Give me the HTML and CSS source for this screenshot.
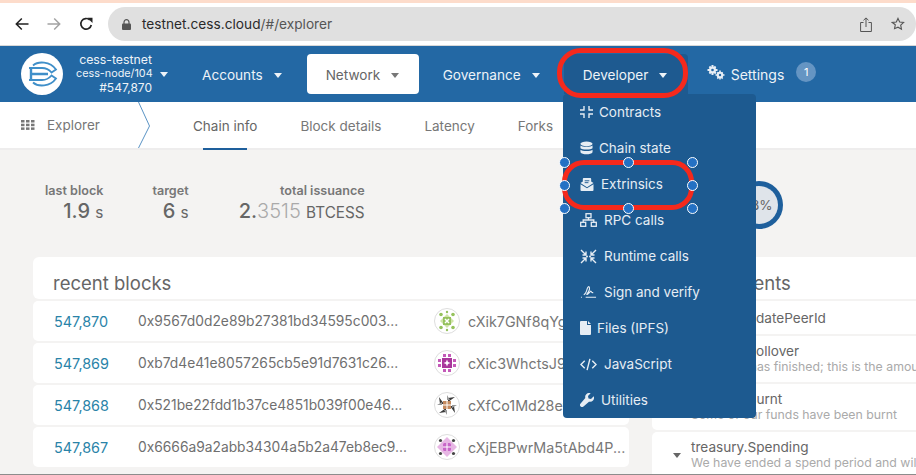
FILE: index.html
```html
<!DOCTYPE html>
<html>
<head>
<meta charset="utf-8"/>
<title>testnet.cess.cloud</title>
<link rel="stylesheet" href="styles.css">
</head>
<body>
<div class="topstrip"></div>

<div class="browserbar">
  <svg class="bicon back" width="14" height="14" viewBox="0 0 14 14"><path d="M13.500 7H1.500M6.800 1.500 1.300 7l5.500 5.500" fill="none" stroke="#222" stroke-width="1.500"/></svg>
  <svg class="bicon fwd" width="14" height="14" viewBox="0 0 14 14"><path d="M.5 7h12M7.200 1.500 12.700 7l-5.500 5.500" fill="none" stroke="#a3a3a3" stroke-width="1.500"/></svg>
  <svg class="bicon reload" width="14" height="14" viewBox="0 0 14 14"><path d="M12.300 8A5.300 5.300 0 1 1 10.800 3" fill="none" stroke="#222" stroke-width="1.700"/><path d="M8.300.8h5.200V6z" fill="#222"/></svg>
  <div class="urlpill">
    <svg width="9" height="11" viewBox="0 0 9 11"><path d="M2 5V3.200a2.500 2.500 0 0 1 5 0V5" fill="none" stroke="#555" stroke-width="1.200"/><rect y="4.400" width="9" height="6.600" rx="1" fill="#555"/></svg>
    <span class="host">testnet.cess.cloud</span><span class="path">/#/explorer</span>
    <span class="spacer"></span>
    <svg width="12" height="15" viewBox="0 0 12 15"><path d="M3.500 5.500H.6v9h10.800v-9H8.500M6 10V1M3.500 3.300 6 .9l2.500 2.400" fill="none" stroke="#555" stroke-width="1"/></svg>
    <svg width="14" height="14" viewBox="0 0 15 15"><path d="m7.500 1.500 1.800 3.900 4.200.5-3.100 2.900.8 4.200-3.700-2.100L3.800 12.500l.8-4.200L1.500 5.900l4.200-.5z" fill="none" stroke="#555" stroke-width="1.200"/></svg>
  </div>
</div>

<nav class="mainnav">
  <div class="chain">
    <svg class="logo" width="42" height="42" viewBox="0 0 42 42">
      <circle cx="21" cy="21" r="21" fill="#fff"/>
      <g fill="none" stroke="#3f8fc9" stroke-width="1.800">
        <path d="M12 12.500C17 8 29 8 35 16.500L30.500 19.500C28 16.500 25 15 21 15H8"/>
        <path d="M12 29.500C17 34 29 34 35 25.500L30.500 22.500C28 25.500 25 27 21 27H8"/>
        <path d="M10 15V27M10 21H27" stroke-width="2.400"/>
      </g>
    </svg>
    <div class="chaininfo">
      <div class="cname">cess-testnet</div>
      <div class="small">cess-node/104<i class="caret"></i></div>
      <div>#547,870</div>
    </div>
  </div>
  <a class="tab accounts">Accounts<i class="caret"></i></a>
  <a class="tab network">Network<i class="caret"></i></a>
  <a class="tab governance">Governance<i class="caret"></i></a>
  <a class="tab developer">Developer<i class="caret"></i></a>
  <a class="tab settings">
    <svg width="18" height="15" viewBox="0 0 18 15"><g fill="#e8eef5"><circle cx="5.500" cy="5" r="3.500"/><path d="M4.500 0h2v10h-2zM.5 4h10v2H.5zM1.700 2.200l1.400-1.400 6.400 7-1.400 1.400zM7.900.8l1.400 1.400-6.200 7-1.400-1.400z"/><circle cx="13" cy="10" r="3.300"/><path d="M12.200 5.500h1.600v9h-1.600zM8.500 9.200h9v1.600h-9zM9.800 7.900l1.100-1.100 5.300 6.300-1.100 1.100zM15.100 6.800l1.100 1.100-5.300 6.300-1.100-1.100z"/></g><circle cx="5.500" cy="5" r="1.300" fill="#2368a4"/><circle cx="13" cy="10" r="1.200" fill="#2368a4"/></svg>
    Settings<span class="badge">1</span>
  </a>
</nav>

<div class="subnav">
  <div class="crumb">
    <svg width="14" height="10" viewBox="0 0 14 10"><g fill="#777"><rect width="3.500" height="2.500"/><rect x="5" width="3.500" height="2.500"/><rect x="10" width="3.500" height="2.500"/><rect y="3.700" width="3.500" height="2.500"/><rect x="5" y="3.700" width="3.500" height="2.500"/><rect x="10" y="3.700" width="3.500" height="2.500"/><rect y="7.400" width="3.500" height="2.500"/><rect x="5" y="7.400" width="3.500" height="2.500"/><rect x="10" y="7.400" width="3.500" height="2.500"/></g></svg>
    <span>Explorer</span>
  </div>
  <svg class="chevron" width="13" height="46" viewBox="0 0 13 46"><path d="M.5 0 11.500 24 .5 46" fill="none" stroke="#5a93c4" stroke-width="1"/></svg>
  <div class="subtabs">
    <a class="active">Chain info</a>
    <a>Block details</a>
    <a>Latency</a>
    <a>Forks</a>
  </div>
</div>

<main class="content">
  <div class="stats">
    <div class="stat s1"><label>last block</label><b>1.9 <small>s</small></b></div>
    <div class="stat s2"><label>target</label><b>6 <small>s</small></b></div>
    <div class="stat s3"><label>total issuance</label><b>2.<em>3515</em> <small>BTCESS</small></b></div>
    <div class="ring"><span>18%</span></div>
  </div>

  <div class="columns">
    <section class="blocks">
      <h2 class="cardhead">recent blocks</h2>
      <div class="row">
        <a class="num">547,870</a><span class="hash">0x9567d0d2e89b27381bd34595c003...</span>
        <svg class="ident" width="26" height="26" viewBox="0 0 26 26"><circle cx="13" cy="13" r="12.500" fill="#fff" stroke="#ddd"/><path d="M13 6l7 7-7 7-7-7z" fill="#cfe3a8"/><rect x="9" y="9" width="8" height="8" fill="#96c25e"/><path d="M11 11l4 4M15 11l-4 4" stroke="#fff" stroke-width="1.500"/><g fill="#96c25e"><circle cx="7" cy="6.500" r="1.800"/><circle cx="19" cy="6.500" r="1.800"/><circle cx="7" cy="19.500" r="1.800"/><circle cx="19" cy="19.500" r="1.800"/><circle cx="13" cy="4" r="1.200"/><circle cx="13" cy="22" r="1.200"/></g></svg>
        <span class="addr">cXik7GNf8qYgfKhTz</span>
      </div>
      <div class="row">
        <a class="num">547,869</a><span class="hash">0xb7d4e41e8057265cb5e91d7631c26...</span>
        <svg class="ident" width="26" height="26" viewBox="0 0 26 26"><circle cx="13" cy="13" r="12.500" fill="#fff" stroke="#ddd"/><rect x="8" y="8" width="10" height="10" fill="#a9369b"/><path d="M13 9.500l1 2.500 2.500 1-2.500 1-1 2.500-1-2.500-2.500-1 2.500-1z" fill="#fff"/><g fill="#c45ab8"><rect x="9" y="4" width="3" height="3"/><rect x="14" y="4" width="3" height="3"/><rect x="9" y="19" width="3" height="3"/><rect x="14" y="19" width="3" height="3"/><rect x="4" y="9" width="3" height="3"/><rect x="4" y="14" width="3" height="3"/><rect x="19" y="9" width="3" height="3"/><rect x="19" y="14" width="3" height="3"/></g></svg>
        <span class="addr">cXic3WhctsJ9dQmRa</span>
      </div>
      <div class="row">
        <a class="num">547,868</a><span class="hash">0x521be22fdd1b37ce4851b039f00e46...</span>
        <svg class="ident" width="26" height="26" viewBox="0 0 26 26"><circle cx="13" cy="13" r="12.500" fill="#fff" stroke="#ddd"/><g fill="#3a3a3a"><path d="M5 5l5 7-4 0zM21 5l-7 5 0-4zM21 21l-5-7 4 0zM5 21l7-5 0 4z"/></g><g fill="#999"><path d="M3 13l5-3 0 3zM23 13l-5 3 0-3zM13 3l3 5-3 0zM13 23l-3-5 3 0z"/></g><rect x="9" y="9" width="8" height="8" fill="#c48a5f"/><path d="M13 9v8M9 13h8" stroke="#fff"/></svg>
        <span class="addr">cXfCo1Md28ewLpNtw</span>
      </div>
      <div class="row">
        <a class="num">547,867</a><span class="hash">0x6666a9a2abb34304a5b2a47eb8ec9...</span>
        <svg class="ident" width="26" height="26" viewBox="0 0 26 26"><circle cx="13" cy="13" r="12.500" fill="#fff" stroke="#ddd"/><path d="M13 3l10 10-10 10L3 13z" fill="#e7b6e4"/><rect x="9" y="9" width="8" height="8" rx="1.500" fill="#c865c8"/><path d="M13 9v8M9 13h8" stroke="#fff"/><g fill="#444"><circle cx="6.500" cy="6.500" r="1.600"/><circle cx="19.500" cy="6.500" r="1.600"/><circle cx="6.500" cy="19.500" r="1.600"/><circle cx="19.500" cy="19.500" r="1.600"/></g></svg>
        <span class="addr">cXjEBPwrMa5tAbd4P...</span>
      </div>
    </section>

    <section class="events">
      <h2 class="cardhead">recent events</h2>
      <div class="row ev one"><i class="evcaret"></i><div><p>sminer.UpdatePeerId</p></div></div>
      <div class="row ev"><i class="evcaret"></i><div><p>treasury.Rollover</p><p class="note">Spending has finished; this is the amount that rolls over</p></div></div>
      <div class="row ev"><i class="evcaret"></i><div><p>treasury.Burnt</p><p class="note">Some of our funds have been burnt</p></div></div>
      <div class="row ev"><i class="evcaret"></i><div><p>treasury.Spending</p><p class="note">We have ended a spend period and will now allocate</p></div></div>
    </section>
  </div>
</main>
<div class="bottomline"></div>

<div class="devmenu">
  <a class="m1"><svg width="13" height="12" viewBox="0 0 13 12"><path d="M4 0v4H0M9 0v4h4M4 12V8H0M9 12V8h4" fill="none" stroke="#e6edf4" stroke-width="1.400"/></svg>Contracts</a>
  <a class="m1"><svg width="13" height="14" viewBox="0 0 14 14"><g fill="#e6edf4"><ellipse cx="7" cy="2.500" rx="6.500" ry="2.500"/><path d="M.5 4.200C2 6 12 6 13.500 4.200v3C12 9 2 9 .5 7.200zM.5 9C2 10.800 12 10.800 13.500 9v2.500C12 14.500 2 14.500 .5 11.500z"/></g></svg>Chain state</a>
  <a class="m2"><svg width="14" height="13" viewBox="0 0 15 14"><path d="M.5 5.500 3 3.700V1.200C3 .5 3.500 0 4.200 0h6.600c.7 0 1.200.5 1.200 1.200v2.500l2.500 1.800L7.500 10z" fill="#e6edf4"/><path d="M.5 6.800 7.500 11l7-4.200V13a1 1 0 0 1-1 1h-12a1 1 0 0 1-1-1z" fill="#e6edf4"/><path d="M5 3h5M5 5h4" stroke="#1d5a90"/></svg>Extrinsics</a>
  <a class="m3"><svg width="17" height="14" viewBox="0 0 17 14"><g fill="none" stroke="#e6edf4" stroke-width="1.300"><rect x="6" y=".7" width="5" height="4"/><rect x=".7" y="9.300" width="5" height="4"/><rect x="11.300" y="9.300" width="5" height="4"/><path d="M8.500 4.700V7M3.200 9.300V7h10.600v2.300"/></g></svg>RPC calls</a>
  <a class="m3"><svg width="17" height="15" viewBox="0 0 17 15"><g fill="none" stroke="#e6edf4" stroke-width="1.400"><path d="M1 1l5 5M6 2.500V6H2.500M16 1l-5 5M11 2.500V6h3.500M1 14l5-5M6 12.500V9H2.500M16 14l-5-5M11 12.500V9h3.500"/></g><circle cx="7" cy="7.500" r="1" fill="#e6edf4"/><circle cx="10" cy="7.500" r="1" fill="#e6edf4"/></svg>Runtime calls</a>
  <a class="m3"><svg width="17" height="14" viewBox="0 0 18 14"><path d="M1 12.500h1M4 10c2-1 3-4 3.500-6S9.500 0 10 2.500 9 7 7.500 9 10 8 11 6.500s1 2 3 1M6 12.500h11" fill="none" stroke="#e6edf4" stroke-width="1.200"/></svg>Sign and verify</a>
  <a class="m4"><svg width="11" height="14" viewBox="0 0 11 14"><path d="M1 0h6v4h4v9a1 1 0 0 1-1 1H1a1 1 0 0 1-1-1V1a1 1 0 0 1 1-1zM8 0l3 3H8z" fill="#e6edf4"/></svg>Files (IPFS)</a>
  <a class="m3"><svg width="17" height="13" viewBox="0 0 18 13"><path d="M5 2.500 1 6.500l4 4M13 2.500l4 4-4 4M10.500.5l-3 12" fill="none" stroke="#e6edf4" stroke-width="1.500"/></svg>JavaScript</a>
  <a class="m2"><svg width="14" height="14" viewBox="0 0 14 14"><path d="M13.700 3.300 11 6l-2.500-.5L8 3 10.700.3A4 4 0 0 0 5.300 5L.6 10.500a2 2 0 0 0 2.900 2.900L9 8.700a4 4 0 0 0 4.700-5.400z" fill="#e6edf4"/></svg>Utilities</a>
</div>

<div class="oval oval-dev"></div>
<div class="oval oval-ext"></div>
<i class="handle h1"></i><i class="handle h2"></i><i class="handle h3"></i>
<i class="handle h4"></i><i class="handle h5"></i>
<i class="handle h6"></i><i class="handle h7"></i><i class="handle h8"></i>

</body>
</html>
```

FILE: styles.css
```css
html, body {
  margin: 0;
  padding: 0;
}

body {
  width: 916px;
  height: 475px;
  overflow: hidden;
  position: relative;
  font-family: Inter, "Liberation Sans", sans-serif;
  background-color: #f4f3f2;
  color: #666;
}

.topstrip {
  height: 3px;
  background-color: #fddccb;
}

/* browser chrome */
.browserbar {
  height: 42px;
  background-color: #fff;
  display: flex;
  align-items: center;
  padding-left: 15px;
  border-bottom: 1px solid #d8d8d8;
}

.bicon.fwd {
  margin-left: 18px;
}

.bicon.reload {
  margin-left: 18px;
}

.urlpill {
  margin-left: 15px;
  flex: 1;
  height: 34px;
  border-radius: 17px;
  background-color: #e0e0e0;
  display: flex;
  align-items: center;
  padding: 0 11px 0 14px;
  font-size: 13.700px;
}

.host {
  margin-left: 11px;
  color: #2a2a2a;
}

.path {
  color: #555;
}

.spacer {
  flex: 1;
}

.urlpill svg + svg {
  margin-left: 19px;
}

/* main nav */
.mainnav {
  height: 56px;
  background-color: #2368a4;
  display: flex;
  align-items: center;
  color: #eef3f8;
  font-size: 13.600px;
}

.chain {
  display: flex;
  align-items: center;
  width: 182px;
  padding-left: 21px;
  box-sizing: border-box;
}

.logo {
  flex: none;
}

.chaininfo {
  width: 76px;
  margin-left: 13px;
  padding-right: 16px;
  text-align: right;
  font-size: 12px;
  line-height: 14px;
  white-space: nowrap;
  position: relative;
}

.chaininfo .cname {
  font-size: 12.300px;
}

.chaininfo .small {
  font-size: 10.800px;
}

.chaininfo .caret {
  position: absolute;
  right: 0;
  top: 19px;
  margin: 0;
}

.caret {
  display: inline-block;
  border-left: 4.500px solid transparent;
  border-right: 4.500px solid transparent;
  border-top: 5px solid #eef3f8;
  margin-left: 11px;
  vertical-align: 2px;
}

.tab {
  display: block;
  white-space: nowrap;
}

.accounts {
  margin-left: 20px;
  margin-top: 2px;
}

.network {
  margin-left: 25px;
  width: 112px;
  height: 40px;
  line-height: 42px;
  padding-left: 19px;
  box-sizing: border-box;
  background-color: #fff;
  color: #666;
  border-radius: 4px;
}

.network .caret {
  border-top-color: #777;
}

.governance {
  margin-left: 24px;
  margin-top: 2px;
}

.developer {
  margin-left: 24px;
  width: 124px;
  height: 40px;
  line-height: 42px;
  box-sizing: border-box;
  padding-left: 19px;
  background-color: #1e5a90;
  border-radius: 4px 4px 0 0;
}

.settings {
  margin-left: 19px;
  display: flex;
  align-items: center;
  font-size: 14px;
}

.settings svg {
  margin-right: 6px;
  margin-top: -3px;
}

.badge {
  width: 20px;
  height: 20px;
  border-radius: 50%;
  background-color: #6595c3;
  color: #fff;
  font-size: 11px;
  line-height: 20px;
  text-align: center;
  margin-left: 12px;
  margin-top: -4px;
}

/* second row */
.subnav {
  height: 46px;
  background-color: #fff;
  display: flex;
  align-items: center;
  font-size: 13.500px;
  color: #777;
  border-bottom: 2px solid #eeeded;
}

.crumb {
  width: 138px;
  padding-left: 21px;
  box-sizing: border-box;
  display: flex;
  align-items: center;
  margin-top: -1px;
}

.crumb span {
  margin-left: 12px;
}

.chevron {
  flex: none;
  align-self: flex-start;
}

.subtabs {
  display: flex;
  margin-left: 42px;
  height: 46px;
  gap: 43px;
  line-height: 48px;
}

.subtabs a {
  white-space: nowrap;
}

.subtabs a.active {
  color: #666;
  position: relative;
}

.subtabs a.active::after {
  content: "";
  position: absolute;
  left: 10px;
  right: 10px;
  top: 46px;
  height: 2px;
  background-color: #1e5f9c;
}

/* content */
.stats {
  display: flex;
  height: 107px;
  padding-left: 45px;
  box-sizing: border-box;
  padding-top: 33px;
}

.stat {
  text-align: right;
}

.stat label {
  display: block;
  font-size: 12.600px;
  font-weight: 600;
  color: #777;
  line-height: 16px;
}

.stat b {
  display: block;
  font-size: 20px;
  font-weight: 500;
  color: #666;
  line-height: 24px;
}

.stat small {
  font-size: 15.300px;
  font-weight: 400;
}

.stat em {
  font-style: normal;
  font-weight: 300;
  color: #aaa;
}

.s2 {
  margin-left: 49px;
}

.s3 {
  margin-left: 50px;
}

.ring {
  position: absolute;
  left: 735px;
  top: 181px;
  width: 48px;
  height: 48px;
  box-sizing: border-box;
  border-radius: 50%;
  background-color: #dfe4ea;
  border: 5px solid #1e5f9c;
  border-left-color: transparent;
  font-size: 13.500px;
  line-height: 38px;
  text-align: center;
}

.columns {
  display: flex;
  gap: 23px;
  padding-left: 33px;
}

section {
  flex: none;
}

.blocks {
  width: 596px;
}

.events {
  width: 300px;
}

.cardhead {
  margin: 0 0 2px;
  height: 42px;
  background-color: #fff;
  border-radius: 6px;
  font-size: 18.500px;
  font-weight: 400;
  line-height: 53px;
  padding-left: 20px;
  color: #666;
  overflow: hidden;
}

.row {
  height: 40px;
  background-color: #fff;
  border-radius: 5px;
  margin-bottom: 2px;
  display: flex;
  align-items: center;
  font-size: 13.800px;
  white-space: nowrap;
  overflow: hidden;
}

.num {
  margin-left: 21px;
  width: 84px;
  font-size: 14.400px;
  color: #2a83a8;
}

.hash {
  width: 296px;
  color: #6f6f6f;
}

.ident {
  flex: none;
}

.addr {
  margin-left: 8px;
  font-size: 14.300px;
  color: #777;
}

.ev {
  height: 46px;
  padding-left: 21px;
  line-height: 15px;
  font-size: 13.600px;
}

.ev.one {
  height: 31px;
  padding-top: 2px;
}

.ev p {
  margin: 0;
  color: #666;
}

.ev p.note {
  font-size: 12.300px;
  color: #aaa;
}

.evcaret {
  border-left: 4.500px solid transparent;
  border-right: 4.500px solid transparent;
  border-top: 5px solid #666;
  margin-right: 10px;
}

.bottomline {
  position: absolute;
  left: 0;
  right: 0;
  bottom: 0;
  height: 1px;
  background-color: #8c8c8c;
}

/* dropdown, lies over the page */
.devmenu {
  position: absolute;
  left: 563px;
  top: 94px;
  width: 193px;
  height: 324px;
  background-color: #1d5a90;
  border-radius: 4px;
  display: flex;
  flex-direction: column;
  font-size: 13.500px;
  color: #e6edf4;
}

.devmenu a {
  height: 36px;
  display: flex;
  align-items: center;
  padding-left: 17px;
  flex: none;
}

.devmenu svg {
  flex: none;
}

.m1 svg, .m4 svg {
  margin-right: 6px;
}

.m2 svg, .m3 svg {
  margin-right: 7px;
}

/* annotation marks drawn on the screenshot */
.oval {
  position: absolute;
  box-sizing: border-box;
  border: 5px solid #f5291c;
}

.oval-dev {
  left: 557px;
  top: 48px;
  width: 131px;
  height: 50px;
  border-radius: 24px;
}

.oval-ext {
  left: 562px;
  top: 160px;
  width: 132px;
  height: 50px;
  border-radius: 22px;
}

.handle {
  position: absolute;
  width: 9px;
  height: 9px;
  border-radius: 50%;
  background-color: #2471c4;
  border: 1px solid #fff;
}

.h1 { left: 559px; top: 157px; }
.h2 { left: 623px; top: 157px; }
.h3 { left: 687px; top: 157px; }
.h4 { left: 559px; top: 180px; }
.h5 { left: 687px; top: 180px; }
.h6 { left: 559px; top: 203px; }
.h7 { left: 623px; top: 203px; }
.h8 { left: 687px; top: 203px; }
```
